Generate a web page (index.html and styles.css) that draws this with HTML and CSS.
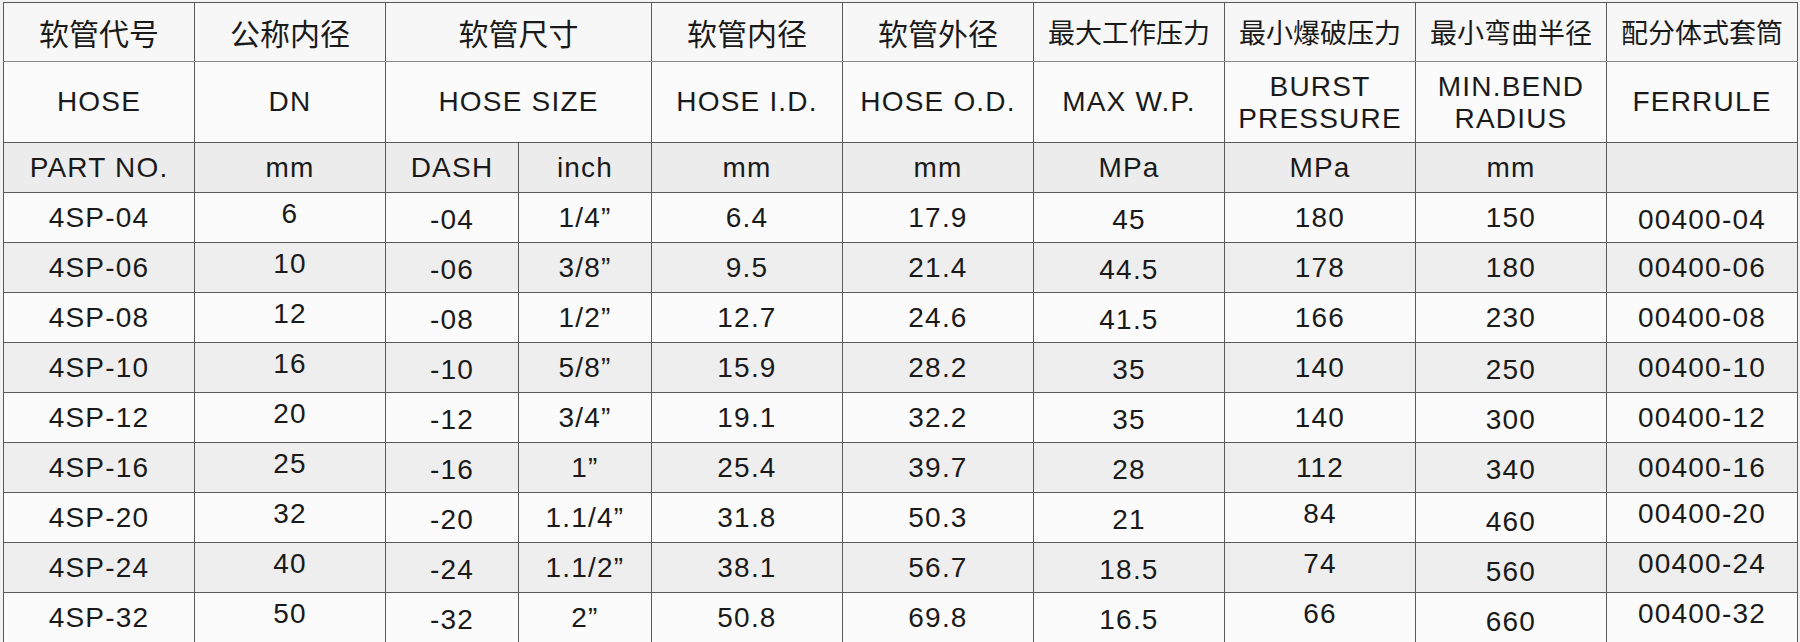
FILE: index.html
```html
<!DOCTYPE html>
<html lang="zh-CN">
<head>
<meta charset="utf-8">
<title>4SP 软管参数表</title>
<link rel="stylesheet" href="styles.css">
</head>
<body>
<div class="sheet">
<table class="spec">
  <colgroup>
    <col class="c-wide"><col class="c-wide"><col class="c-narrow"><col class="c-narrow">
    <col class="c-wide"><col class="c-wide"><col class="c-wide"><col class="c-wide"><col class="c-wide"><col class="c-wide">
  </colgroup>
  <thead>
    <tr class="row-cn">
      <th>软管代号</th>
      <th>公称内径</th>
      <th colspan="2">软管尺寸</th>
      <th>软管内径</th>
      <th>软管外径</th>
      <th class="cn-long">最大工作压力</th>
      <th class="cn-long">最小爆破压力</th>
      <th class="cn-long">最小弯曲半径</th>
      <th class="cn-long">配分体式套筒</th>
    </tr>
    <tr class="row-en">
      <th>HOSE</th>
      <th>DN</th>
      <th colspan="2">HOSE SIZE</th>
      <th>HOSE I.D.</th>
      <th>HOSE O.D.</th>
      <th>MAX W.P.</th>
      <th class="two-line">BURST<br>PRESSURE</th>
      <th class="two-line">MIN.BEND<br>RADIUS</th>
      <th>FERRULE</th>
    </tr>
    <tr class="row-unit">
      <th>PART NO.</th>
      <th>mm</th>
      <th>DASH</th>
      <th>inch</th>
      <th>mm</th>
      <th>mm</th>
      <th>MPa</th>
      <th>MPa</th>
      <th>mm</th>
      <th></th>
    </tr>
  </thead>
  <tbody>
    <tr><td>4SP-04</td><td class="up">6</td><td class="dn">-04</td><td>1/4”</td><td>6.4</td><td>17.9</td><td class="dn">45</td><td>180</td><td>150</td><td class="dn">00400-04</td></tr>
    <tr><td>4SP-06</td><td class="up">10</td><td class="dn">-06</td><td>3/8”</td><td>9.5</td><td>21.4</td><td class="dn">44.5</td><td>178</td><td>180</td><td>00400-06</td></tr>
    <tr><td>4SP-08</td><td class="up">12</td><td class="dn">-08</td><td>1/2”</td><td>12.7</td><td>24.6</td><td class="dn">41.5</td><td>166</td><td>230</td><td>00400-08</td></tr>
    <tr><td>4SP-10</td><td class="up">16</td><td class="dn">-10</td><td>5/8”</td><td>15.9</td><td>28.2</td><td class="dn">35</td><td>140</td><td class="dn">250</td><td>00400-10</td></tr>
    <tr><td>4SP-12</td><td class="up">20</td><td class="dn">-12</td><td>3/4”</td><td>19.1</td><td>32.2</td><td class="dn">35</td><td>140</td><td class="dn">300</td><td>00400-12</td></tr>
    <tr><td>4SP-16</td><td class="up">25</td><td class="dn">-16</td><td>1”</td><td>25.4</td><td>39.7</td><td class="dn">28</td><td>112</td><td class="dn">340</td><td>00400-16</td></tr>
    <tr><td>4SP-20</td><td class="up">32</td><td class="dn">-20</td><td>1.1/4”</td><td>31.8</td><td>50.3</td><td class="dn">21</td><td class="up">84</td><td class="dn2">460</td><td class="up">00400-20</td></tr>
    <tr><td>4SP-24</td><td class="up">40</td><td class="dn">-24</td><td>1.1/2”</td><td>38.1</td><td>56.7</td><td class="dn">18.5</td><td class="up">74</td><td class="dn2">560</td><td class="up">00400-24</td></tr>
    <tr><td>4SP-32</td><td class="up">50</td><td class="dn">-32</td><td>2”</td><td>50.8</td><td>69.8</td><td class="dn">16.5</td><td class="up">66</td><td class="dn2">660</td><td class="up">00400-32</td></tr>
  </tbody>
</table>
</div>
</body>
</html>
```
FILE: styles.css
```css
html, body {
  margin: 0;
  padding: 0;
  background: #f2f2f2;
}

.sheet {
  padding: 2px 0 0 3px;
}

.spec {
  border-collapse: collapse;
  table-layout: fixed;
  width: 1792px;
  font-family: "Liberation Sans", Arial, sans-serif;
  color: #1a1a1a;
  font-size: 28px;
  line-height: 30px;
  letter-spacing: 1.2px;
}

.c-wide { width: 191px; }
.c-narrow { width: 133px; }

.spec th,
.spec td {
  border: 1px solid #5a5a5a;
  padding: 0;
  text-align: center;
  vertical-align: middle;
  font-weight: normal;
  white-space: nowrap;
  overflow: hidden;
}

.row-cn { height: 59px; }

.row-cn th {
  background: #f7f7f7;
  font-family: "Noto Sans CJK SC", "Liberation Sans", sans-serif;
  font-size: 30px;
  letter-spacing: 0;
  line-height: 34px;
  border-bottom-color: #8a8a8a;
}

.row-cn th.cn-long {
  font-size: 27px;
}

.row-en { height: 81px; }

.row-en th {
  background: #fbfbfb;
  border-top-color: #8a8a8a;
}

.row-en th.two-line {
  line-height: 32px;
  padding-top: 2px;
}

.row-unit { height: 50px; }

.row-unit th {
  background: #ececec;
}

.spec tbody tr { height: 50px; }

.spec tbody td {
  background: #fbfbfb;
}

.spec tbody tr:nth-child(even) td {
  background: #eeeeee;
}

.spec tbody td.up {
  padding-bottom: 7px;
}

.spec tbody td.dn {
  padding-top: 4px;
}

.spec tbody td.dn2 {
  padding-top: 8px;
}
```
